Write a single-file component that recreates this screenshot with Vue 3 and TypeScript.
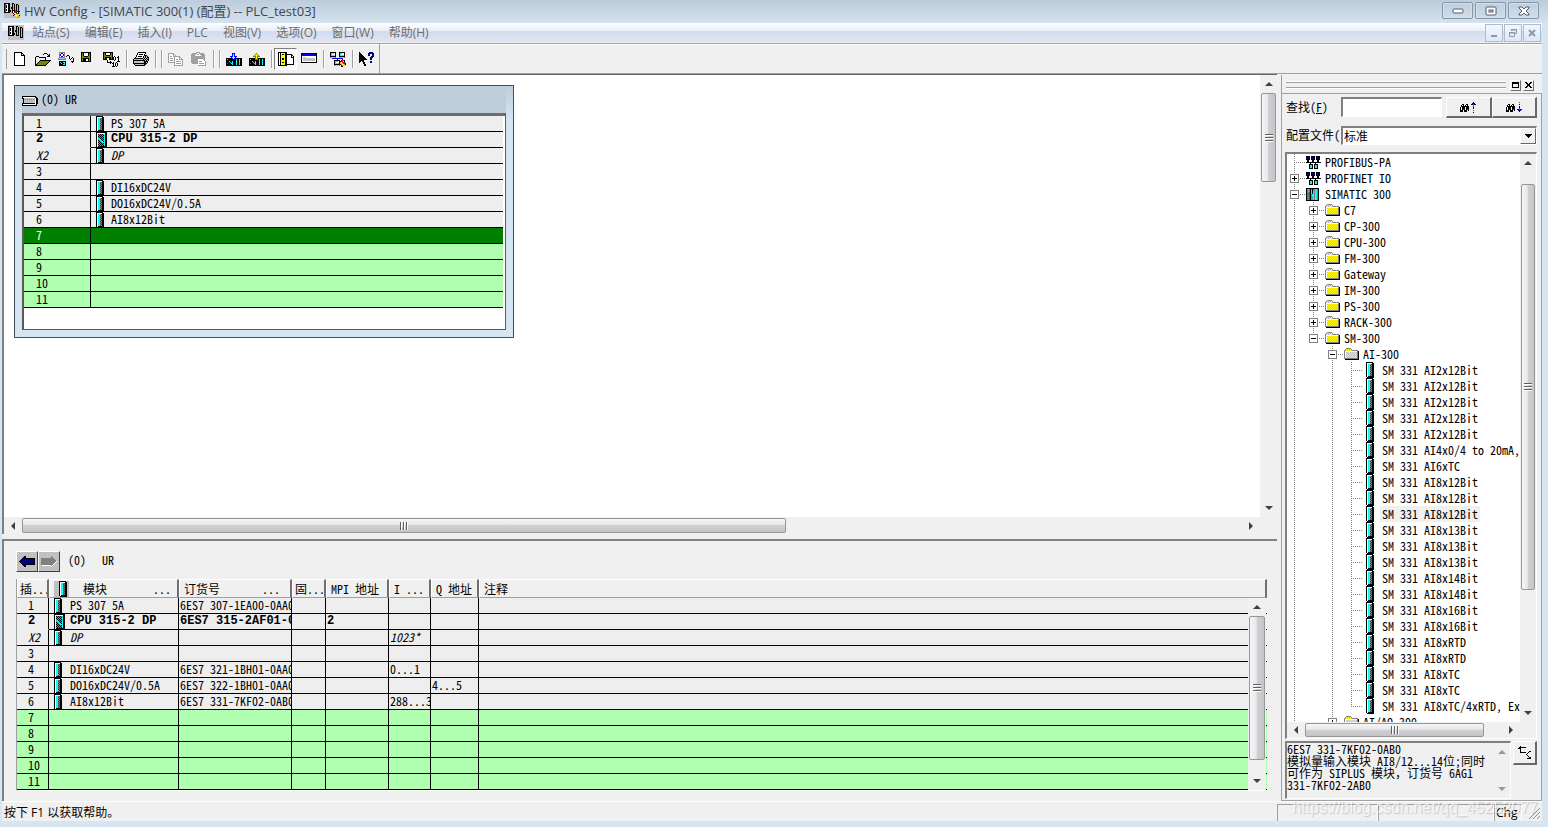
<script setup lang="ts">
import { h, ref } from 'vue'

const palette: Record<string, string> = {
  K: '#000000', W: '#ffffff', G: '#808080', L: '#c0c0c0', Y: '#ffff00', O: '#808000',
  C: '#00ffff', T: '#008080', B: '#0000ff', N: '#000080', R: '#ff0000', A: '#ff9a30', D: '#404040', S: '#a0a0a0',
}

const moduleRows = ['KKKKKKK.', 'KWWWWWKK']
for (let i = 0; i < 6; i++) moduleRows.push('KWCCGDKK', 'KWCCDGKK')
moduleRows.push('KWKKKKKK', '.KKKKKKK')

const doc = ['KKKKKKKK....', 'KWWWWWWKK...', 'KWWWWWWKWK..', 'KWWWWWWKKKK.']
for (let i = 0; i < 9; i++) doc.push('KWWWWWWWWWK.')
doc.push('KKKKKKKKKKK.')

const icons: Record<string, string[]> = {
  module: moduleRows,
  doc,
  cpu: [
    'KKKKKKKKKKK', 'KWWWWWWWWKK', 'KWKGKGKGCKK', 'KWGKGKGKCKK', 'KWKGKGKGCKK', 'KWGKGKGKCKK', 'KWCCKGKGCKK', 'KWGCCKGKCKK',
    'KWKGCCKGCKK', 'KWGKGCCKCKK', 'KWKGKGCCCKK', 'KWGKGKGKCKK', 'KWKGKGKGCKK', 'KWGKGKGKCKK', 'KWKKKKKKKKK', '.KKKKKKKKKK',
  ],
  logo: [
    'LLLLLLLLLLLLLLLL', 'KKKKKKLLKKLLLLLL', 'KTWWKKLLKCKLKKLL', 'KTKWKKLLKCKLKCKL', 'KTKWKKLLKCKLKCKL', 'KTKWKKLKKCKLKCKL', 'KTWWKKLKKCKLKCKL',
    'KTKWKKLLKCKLKCKL', 'KTKWKKKLKCKLKCKL', 'KTWWKKKLKCKLKCKL', 'KKKKKKLLKKKLKCKL', 'LLLLLLLLLLLLKCKL', 'LLLLLLLLLLLLKKKL', 'LLLLLLLLLLLLLLLL', 'LLLLLLLLLLLLLLLL',
  ],
  appLogo: [
    'KKKKKKLLKKLLLLLL', 'KTWWKKLLKCKLKKLL', 'KTKWKKLLKCKLKCKL', 'KTKWKKLLKCKLKCKL', 'KTKWKKLKKCKLKCKL', 'KTWWKKLKKCKLKCKL',
    'KTKWKKLLKCKLKCKL', 'KTKWKKKLKKKRKCKL', 'KTWWKKKLKWKRRKKK', 'KKKKKKLLKWRRKWKL', 'LLLLLLLLLKWYRRKL', 'LLLLLLLLLLKYYAWL', 'LLLLLLLLLKAYYYAK', 'LLLLLLLLLLLAYAAA', 'LLLLLLLLLLLLAAAL',
  ],
  open: [
    '.........KKK....', '........K...K.K.', '.............KK.', '.KKK........KKK.', 'KYWYKKKKKKK.....', 'KWYWYWYWYWK.....', 'KYWYWYWYWYK.....',
    'KWYWYKKKKKKKKKKK', 'KYWYKOOOOOOOOOK.', 'KWYKOOOOOOOOOK..', 'KYKOOOOOOOOOK...', 'KKOOOOOOOOOK....', 'KKKKKKKKKKK.....',
  ],
  online: [
    '.GGGGGG.........', '.GWBBWG.........', '.GBWWBG.........', '.GBWWBG..KK.....', '.GWBBWG.K..K....', '.GGGGGG....K..K.', 'GLLLLLLG...K.K.K', 'GGGGGGGG....K..K',
    '...............K', '.KKKKKKK.....KKK', '.KCKKCCK......K.', '.KKCKKCK........', '.KKKKCCK........', '.KKKKKKK........',
  ],
  save: [
    'KKKKKKKKKK......', 'KOKWWWWKOK......', 'KOKWWWWKOK......', 'KOKWWWWKOK......', 'KOOKKKKOOK......', 'KOOOOOOOOK......', 'KOKKKKKKOK......', 'KOKKKWWKOK......', 'KOKKKWWKOK......', 'KKKKKKKKKK......',
    '................', '................', '................', '................', '................',
  ],
  compile: [
    'KKKKKKKKKK.......', 'KOKWWWWKOK.......', 'KOKWWWWKOK.......', 'KOOKKKKOOK.......', 'KOOOOOOOOK.K...K.', 'KOKKKKKKOKK.K.KK.', 'KOKKWWKKOKK.K..K.', 'KKKKWWKKKKK.K..K.', '....K......K...K.',
    '....K..K......KKK', '....KKKKK.K..K...', '.......K.KK.K.K..', '..........K.K.K..', '..........K.K.K..', '.........KKK.K...',
  ],
  print: [
    '.....KKKKKKKK...', '....KWWWWWWWK...', '....KWKKKKWK....', '...KWWWWWWWKKK..', '...KWKKKKWKLKLK.', '..KWWWWWWWKLKLKK', '.KKKKKKKKKLKLKLK', 'KLLLLLLLLLKLKLKK', 'KKKKKKKKKKKKLKLK',
    'KLLLLLLYYLLKKKK.', 'KLLLLLLLLLLKKLK.', 'KKKKKKKKKKKKKK..', '.KLLLLLLLLLKK...', '..KKKKKKKKKK....',
  ],
  copy: [
    'SSSSSS..........', 'SWWWWSS.........', 'SWWWWSWS........', 'SWSSWSSSSSSS....', 'SWWWWWSWWWWSS...', 'SWSSSWSWWWWSWS..', 'SWWWWWSWSSWSSSS.', 'SWSSSWSWWWWWWWS.', 'SWWWWWSWSSSSSWS.', 'SSSSSSSWWWWWWWS.',
    '......SWSSSSSWS.', '......SWWWWWWWS.', '......SSSSSSSSS.',
  ],
  paste: [
    '.....SSSS.......', '.SSSSSWWSSSSS...', 'SSSSSWSSWSSSSS..', 'SSSSWWWWWWSSSS..', 'SSSSSSSSSSSSSS..', 'SSSSSSSSSSSSSS..', 'SSSSSSSSSSSSSS..', 'SSSSSSSWWWWWSS..', 'SSSSSSSWWWWWWS..', 'SSSSSSSWSSSWWWS.',
    'SSSSSSSWWWWWWWS.', '.SSSSSSWSSSSSWS.', '.......WWWWWWWS.', '.......SSSSSSSS.',
  ],
  download: [
    '......BBB.......', '......BYB.......', '......BYB.......', '....BBBYBBB.....', '.....BYYYB......', 'KKKKKKBYBKKKKKKK', 'KCKKKKKBKKCKKCKK', 'KKKKKKKKKKCKKCKK', 'KKKCKKCKKKCKKCKK', 'KKKKCKCKKKCKKCKK', 'KRKKKCCKKKCKKCKK', 'KKKKKKCKKKCKKCKK', 'KKKKKKKKKKKKKKKK',
  ],
  upload: [
    '.......O........', '......OYO.......', '.....OYYYO......', '....OOOYOOO.....', '......OYO.......', 'KKKKKKOYOKKKKKKK', 'KCKKKKOOOKCKKCKK', 'KKKKKKKKKKCKKCKK', 'KKKCKKCKKKCKKCKK', 'KKKKCKCKKKCKKCKK', 'KRKKKCCKKKCKKCKK', 'KKKKKKCKKKCKKCKK', 'KKKKKKKKKKKKKKKK',
  ],
  catalog: [
    'KKKKKKKKK.......', 'KWKYYYYKK.......', 'KWKYKKYKKKKKKK..', 'KWKYYYYKKWWWWKK.', 'KWKYYYYKKWWWWKWK', 'KWKYYYYKKWWWWKKK', 'KWKYKKYKKWWWWWWK', 'KWKYKKYKKWWWWWWK', 'KWKYYYYKKWWWWWWK', 'KWKYYYYKKWWWWWWK', 'KWKYKKYKKWWWWWWK', 'KWKYYYYKKWWWWWWK', 'KWKYYYYKKKKKKKKK', 'KKKKKKKKK.......',
  ],
  window: [
    'KKKKKKKKKKKKKKKK', 'KBBBBBBBBBBBBBBK', 'KBBBBBBBBBBBBBBK', 'KWWWWWWWWWWWWWWK', 'KWLLLWWWWWWWWWWK', 'KWLLLLLLLLLLLLWK', 'KWLLLLLLLLLLLLWK', 'KWLLLLLLLLLLLLWK', 'KWWWWWWWWWWWWWWK', 'KKKKKKKKKKKKKKKK', '................', '................',
  ],
  network: [
    'KKKKKK...KKKKKK.', 'KCCCWK...KCCCWK.', 'KCWWWK...KCWWWK.', 'KCCCCK...KCCCCK.', 'KKKKKK...KKKKKK.', 'GLLLLG...GLLLLG.', '..BBBBBBBBBBB...', '.......B....B...', '....KKKKKK.KRRK.', '....KCCCWKKRRWK.', '....KCWWWKAYRRK.', '....KCCCCKAYYRRK', '....KKKKKKKAYYAK', '....GLLLLG.KAAA.', '...........KK...',
  ],
  help: [
    'K.........NNNN..', 'KK.......NNNNNN.', 'KKK......NN..NN.', 'KKKK.....NN..NN.', 'KKKKK.......NNN.', 'KKKKKK.....NNN..', 'KKKKKKK....NN...', 'KKKKKKKK...NN...', 'KKKKK...........', 'KK.KK......NN...', 'K...KK.....NN...', '....KK..........', '.....KK.........', '.....KK.........',
  ],
  rack: [
    'KKKKKKKKKKKKKK..', 'KWWWWWWWWWWWWKK.', 'KKLLLLLLLLLLLWKK', '.KLGLGLGLGLGLWKK', '.KLLLLLLLLLLLWKK', '.KLLLLLLLLLLLWKK', '.KLLLLLLLLLLLWKK', 'KKKKKKKKKKKKKWKK', 'KWWWWWWWWWWWWWK.', 'KKKKKKKKKKKKKKK.',
  ],
  bus: [
    'KKKK.KKKK.KKKK.', 'KBNK.KBNK.KBNK.', 'KNNK.KNNK.KNNK.', 'KKKK.KKKK.KKKK.', '.KK...KK...KK..', '.KK...KK...KK..', 'KKKKKKKKKKKKKKK', '....K....K.....', '...KKKK.KKKK...', '...KCCK.KCCK...', '...KCCK.KCCK...', '...KCCK.KCCK...', '...KKKK.KKKK...',
  ],
  station: [
    'KKKKKKKKKKKKK', 'KGCGKGKGGCCGK', 'KGGGKCKGGCCGK', 'KGCGKCKCGCCGK', 'KGGTKCKCGCCGK', 'KTGTKCKCGCCGK', 'KGTTKGCCGCCGK', 'KGGTKGCCGCCGK', 'KGTTKGCCGCCGK', 'KGGTKGGCGCCGK', 'KTGTKGGCGCCGK', 'KGGTKGGCGCCGK', 'KKKKKKKKKKKKK',
  ],
  folder: [
    '..GGGGG........', '.GYLYLYG.......', 'GLYLYLYLGGGGGG.', 'GWWWWWWWWWWWWGK', 'GWLYLYLYLYLYLGK', 'GWYLYLYLYLYLYGK', 'GWLYLYLYLYLYLGK', 'GWYLYLYLYLYLYGK', 'GWLYLYLYLYLYLGK', 'GWYLYLYLYLYLYGK', 'GGGGGGGGGGGGGGK', '.KKKKKKKKKKKKKK',
  ],
  findUp: [
    '.............N..', '............NNN.', '..KK..KK...NNTNN', '.KWK.KWK.....T..', '.KKKKKKKK....T..', 'KWKKKWKKK....N..', 'KWKKKWKKK....N..', 'KWKDKWKDK.......', 'KKK.KKK.K....T..', 'KKK.KKK.........', '.............N..',
  ],
  findDown: [
    '.............T..', '................', '..KK..KK.....N..', '.KWK.KWK........', '.KKKKKKKK....N..', 'KWKKKWKKK....N..', 'KWKKKWKKK....T..', 'KWKDKWKDK..NNTNN', 'KKK.KKK.K...NNN.', 'KKK.KKK......N..', '................',
  ],
  back: [
    '.....KK.........', '....KNK.........', '...KNNKKKKKKKKKK', '..KNNNNNNNNNNNNK', '.KNNNNNNNNNNNNNK', 'KNNNNNNNNNNNNNNK', '.KNNNNNNNNNNNNNK', '..KNNNNNNNNNNNNK', '...KNNKKKKKKKKKK', '....KNK.........', '.....KK.........',
  ],
  forward: [
    '..........G.....', '..........GG....', 'GGGGGGGGGGGGG...', 'GGGGGGGGGGGGGG..', 'GGGGGGGGGGGGGGG.', 'GGGGGGGGGGGGGGGW', 'GGGGGGGGGGGGGGW.', 'GGGGGGGGGGGGGW..', 'GGGGGGGGGGGGW...', '.WWWWWWWWWGW....', '..........W.....',
  ],
  jump: [
    '...K............', '..KKKKKKK.......', '.KKK............', '...K............', '...K............', '...K........KK..', '...KKKKKK..K....', '..........K.....', '.........K......', '..........K.....', '...........K....', '............KK..', '..........KKKK..',
  ],
  dockMax: ['KKKKKKK', 'KKKKKKK', 'K.....K', 'K.....K', 'K.....K', 'KKKKKKK'],
  dockClose: ['KK...KK', '.KK.KK.', '..KKK..', '..KKK..', '.KK.KK.', 'KK...KK'],
}

function PixelIcon(props: { name: string }) {
  const rows = icons[props.name]
  const width = rows[0].length
  const paths: Record<string, string> = {}
  rows.forEach((row, y) => {
    for (let x = 0; x < row.length; x++) {
      const c = row[x]
      if (c === '.') continue
      let n = 1
      while (row[x + n] === c) n++
      paths[c] = (paths[c] ?? '') + `M${x} ${y}h${n}v1h-${n}z`
      x += n - 1
    }
  })
  return h(
    'svg',
    { class: 'pix', width, height: rows.length, viewBox: `0 0 ${width} ${rows.length}`, 'shape-rendering': 'crispEdges', 'aria-hidden': 'true' },
    Object.entries(paths).map(([c, d]) => h('path', { d, fill: palette[c] })),
  )
}
PixelIcon.props = ['name']

const menus = ['站点(S)', '编辑(E)', '插入(I)', 'PLC', '视图(V)', '选项(O)', '窗口(W)', '帮助(H)']
const tools: { icon: string; label: string; gap?: number; disabled?: boolean; pressed?: boolean }[] = [
  { icon: 'doc', label: '新建' },
  { icon: 'open', label: '打开' },
  { icon: 'online', label: '打开在线' },
  { icon: 'save', label: '保存' },
  { icon: 'compile', label: '保存并编译' },
  { icon: 'print', label: '打印', gap: 1 },
  { icon: 'copy', label: '复制', gap: 2, disabled: true },
  { icon: 'paste', label: '粘贴', disabled: true },
  { icon: 'download', label: '下载', gap: 2 },
  { icon: 'upload', label: '上传' },
  { icon: 'catalog', label: '目录', gap: 1, pressed: true },
  { icon: 'window', label: '地址总览' },
  { icon: 'network', label: '组态网络', gap: 1 },
  { icon: 'help', label: '帮助', gap: 1 },
]

interface Slot { no: string; name?: string; icon?: string; order?: string; mpi?: string; i?: string; q?: string; kind?: string }
const slots: Slot[] = [
  { no: '1', name: 'PS 307 5A', icon: 'module', order: '6ES7 307-1EA00-0AA0' },
  { no: '2', name: 'CPU 315-2 DP', icon: 'cpu', order: '6ES7 315-2AF01-0AB0', mpi: '2', kind: 'cpu' },
  { no: 'X2', name: 'DP', icon: 'module', i: '1023*', kind: 'sub' },
  { no: '3' },
  { no: '4', name: 'DI16xDC24V', icon: 'module', order: '6ES7 321-1BH01-0AA0', i: '0...1' },
  { no: '5', name: 'DO16xDC24V/0.5A', icon: 'module', order: '6ES7 322-1BH01-0AA0', q: '4...5' },
  { no: '6', name: 'AI8x12Bit', icon: 'module', order: '6ES7 331-7KF02-0AB0', i: '288...303' },
  ...['7', '8', '9', '10', '11'].map((no) => ({ no, kind: 'free' })),
]
const selectedSlot = ref('7')

interface TreeRow { guides: string[]; icon: string; text: string; toggle?: string; current?: boolean }
const modules = [
  'AI2x12Bit', 'AI2x12Bit', 'AI2x12Bit', 'AI2x12Bit', 'AI2x12Bit', 'AI4x0/4 to 20mA, Ex', 'AI6xTC', 'AI8x12Bit', 'AI8x12Bit', 'AI8x12Bit', 'AI8x13Bit',
  'AI8x13Bit', 'AI8x13Bit', 'AI8x14Bit', 'AI8x14Bit', 'AI8x16Bit', 'AI8x16Bit', 'AI8xRTD', 'AI8xRTD', 'AI8xTC', 'AI8xTC', 'AI8xTC/4xRTD, Ex',
]
const tree: TreeRow[] = [
  { guides: ['tee'], icon: 'bus', text: 'PROFIBUS-PA' },
  { guides: ['tee'], icon: 'bus', text: 'PROFINET IO', toggle: '+' },
  { guides: ['tee'], icon: 'station', text: 'SIMATIC 300', toggle: '-' },
  ...['C7', 'CP-300', 'CPU-300', 'FM-300', 'Gateway', 'IM-300', 'PS-300', 'RACK-300'].map((text) => ({ guides: ['bar', 'tee'], icon: 'folder', text, toggle: '+' })),
  { guides: ['bar', 'elbow'], icon: 'folder', text: 'SM-300', toggle: '-' },
  { guides: ['bar', 'none', 'tee'], icon: 'folder', text: 'AI-300', toggle: '-' },
  ...modules.map((m, n) => ({
    guides: ['bar', 'none', 'bar', n === modules.length - 1 ? 'elbow' : 'tee'],
    icon: 'module',
    text: `SM 331 ${m}`,
    current: n === 9,
  })),
  { guides: ['bar', 'none', 'tee'], icon: 'folder', text: 'AI/AO-300', toggle: '+' },
]

const query = ref('')
const profile = ref('标准')
</script>

<template>
  <div class="app">
    <header class="title">
      <PixelIcon name="appLogo" />
      <h1>HW Config - [SIMATIC 300(1) (配置) -- PLC_test03]</h1>
      <div class="winbtns">
        <button type="button" aria-label="最小化"><svg width="12" height="6"><rect x="1" y="1" width="10" height="4" rx="1" fill="#fff" stroke="#555b66" /></svg></button>
        <button type="button" aria-label="还原"><svg width="12" height="10"><rect x="1" y="1" width="10" height="8" rx="1" fill="#fff" stroke="#555b66" /><rect x="4" y="4" width="4" height="2" fill="#c5d2e0" stroke="#555b66" /></svg></button>
        <button type="button" aria-label="关闭"><svg width="12" height="10"><path d="M1 1h3l2 2 2-2h3v1L8 5l3 3v1H8L6 7 4 9H1V8l3-3-3-3z" fill="#fff" stroke="#555b66" /></svg></button>
      </div>
    </header>
    <div class="client">
      <nav class="menubar">
        <PixelIcon name="logo" />
        <button v-for="m in menus" :key="m" type="button" class="menu">{{ m }}</button>
        <div class="mdibtns">
          <button type="button" aria-label="最小化子窗口"><svg width="10" height="10"><path d="M2 8h6" stroke="#8e97a6" stroke-width="2" /></svg></button>
          <button type="button" aria-label="还原子窗口"><svg width="10" height="10" fill="none" stroke="#8e97a6"><path d="M3.500 3V1.500h5v4H7M3 2h6" /><path d="M1.500 4.500h5v4h-5zM1 5h6" /></svg></button>
          <button type="button" aria-label="关闭子窗口"><svg width="10" height="10"><path d="M2 2l6 6M8 2L2 8" stroke="#8e97a6" stroke-width="2" /></svg></button>
        </div>
      </nav>
      <div class="toolbar">
        <div class="tools">
          <template v-for="t in tools" :key="t.icon">
            <i v-for="n in t.gap ?? 0" :key="n" class="sep"></i>
            <button type="button" class="tool" :class="{ pressed: t.pressed }" :disabled="t.disabled" :aria-label="t.label"><PixelIcon :name="t.icon" /></button>
          </template>
        </div>
      </div>
      <main class="work">
        <div class="left">
          <section class="station">
            <div class="canvas">
              <div class="rack">
                <div class="rack-title"><PixelIcon name="rack" /><span>(0) UR</span></div>
                <div class="rack-body">
                  <table class="rack-table">
                    <colgroup><col class="c-rackno"><col></colgroup>
                    <tbody>
                      <tr v-for="s in slots" :key="s.no" :class="[s.kind, { selected: s.no === selectedSlot }]" @click="selectedSlot = s.no">
                        <td class="no">{{ s.no }}</td>
                        <td><div class="mod"><span v-if="s.icon" class="ic"><PixelIcon :name="s.icon" /></span>{{ s.name }}</div></td>
                      </tr>
                    </tbody>
                  </table>
                </div>
              </div>
            </div>
            <div class="vsb sb-main-v"><button type="button" class="up" aria-label="向上"></button><div class="track"><div class="thumb"></div></div><button type="button" class="down" aria-label="向下"></button></div>
            <div class="hsb sb-main-h"><button type="button" class="prev" aria-label="向左"></button><div class="track"><div class="thumb"></div></div><button type="button" class="next" aria-label="向右"></button></div>
          </section>
          <section class="detail">
            <div class="detail-nav">
              <button type="button" aria-label="后退"><PixelIcon name="back" /></button>
              <button type="button" aria-label="前进"><PixelIcon name="forward" /></button>
              <span class="rack-id">(0)</span><span>UR</span>
            </div>
            <div class="grid">
              <table class="slots">
                <colgroup><col class="c1"><col class="c2"><col class="c3"><col class="c4"><col class="c5"><col class="c6"><col class="c7"><col></colgroup>
                <thead>
                  <tr>
                    <th><div class="th th-slot">插...</div></th>
                    <th><div class="th th-mod"><span class="head-ic"><PixelIcon name="module" /></span>模块<span class="dots">...</span></div></th>
                    <th><div class="th">订货号<span class="dots dots-wide">...</span></div></th>
                    <th><div class="th th-slot">固...</div></th>
                    <th><div class="th">MPI 地址</div></th>
                    <th><div class="th">I ...</div></th>
                    <th><div class="th">Q 地址</div></th>
                    <th><div class="th">注释</div></th>
                  </tr>
                </thead>
                <tbody>
                  <tr v-for="s in slots" :key="s.no" :class="s.kind">
                    <td class="no">{{ s.no }}</td>
                    <td><div class="mod"><span v-if="s.icon" class="ic"><PixelIcon :name="s.icon" /></span>{{ s.name }}</div></td>
                    <td>{{ s.order }}</td>
                    <td></td>
                    <td>{{ s.mpi }}</td>
                    <td>{{ s.i }}</td>
                    <td>{{ s.q }}</td>
                    <td></td>
                  </tr>
                </tbody>
              </table>
              <div class="vsb sb-grid"><button type="button" class="up" aria-label="向上"></button><div class="track"><div class="thumb"></div></div><button type="button" class="down" aria-label="向下"></button></div>
            </div>
          </section>
        </div>
        <aside class="catalog">
          <div class="dock">
            <div class="grips"></div>
            <button type="button" aria-label="最大化目录"><PixelIcon name="dockMax" /></button>
            <button type="button" aria-label="关闭目录"><PixelIcon name="dockClose" /></button>
          </div>
          <div class="cat-body">
            <div class="find">
              <label for="q">查找(<u>F</u>)</label>
              <input id="q" v-model="query" type="text">
              <button type="button" aria-label="向上查找"><PixelIcon name="findUp" /></button>
              <button type="button" aria-label="向下查找"><PixelIcon name="findDown" /></button>
            </div>
            <div class="profile">
              <label for="profile">配置文件(</label>
              <div class="combo"><select id="profile" v-model="profile"><option>标准</option></select></div>
            </div>
            <div class="treebox">
              <ul class="tree">
                <li v-for="(r, n) in tree" :key="n">
                  <span v-for="(g, k) in r.guides" :key="k" class="guide" :class="g">
                    <button v-if="r.toggle && k === r.guides.length - 1" type="button" class="toggle" :class="{ plus: r.toggle === '+' }" :aria-label="r.text"></button>
                  </span>
                  <span class="tree-ic" :class="`ic-${r.icon}`"><PixelIcon :name="r.icon" /></span>
                  <span class="tree-text" :class="{ current: r.current }">{{ r.text }}</span>
                </li>
              </ul>
              <div class="vsb sb-tree-v"><button type="button" class="up" aria-label="向上"></button><div class="track"><div class="thumb"></div></div><button type="button" class="down" aria-label="向下"></button></div>
              <div class="hsb sb-tree-h"><button type="button" class="prev" aria-label="向左"></button><div class="track"><div class="thumb"></div></div><button type="button" class="next" aria-label="向右"></button></div>
              <div class="corner"></div>
            </div>
            <div class="info">
              <div class="infobox">
                <p>6ES7 331-7KF02-0AB0<br>模拟量输入模块 AI8/12...14位;同时<br>可作为 SIPLUS 模块<span class="wide-mark">，</span>订货号 6AG1<br>331-7KF02-2AB0</p>
                <div class="vsb sb-info"><button type="button" class="up" aria-label="向上"></button><div class="track"></div><button type="button" class="down" aria-label="向下"></button></div>
              </div>
              <button type="button" class="jump" aria-label="转到"><PixelIcon name="jump" /></button>
            </div>
          </div>
        </aside>
      </main>
      <footer class="status">
        <span class="hint">按下 F1 以获取帮助。</span>
        <span class="cell wide"></span>
        <span class="cell mid"></span>
        <span class="cell chg">Chg</span>
        <svg class="sizer" width="14" height="14"><path d="M2 13L13 2M6 13l7-7M10 13l3-3" stroke="#909090" stroke-width="1" /></svg>
        <span class="watermark">https://blog.csdn.net/qq_45252077</span>
      </footer>
    </div>
  </div>
</template>

<style>
body {
  background: #d7e4f2;
}
.pix {
  display: block;
  flex: none;
}
</style>

<style scoped>
.app {
  height: 100vh;
  display: flex;
  flex-direction: column;
  overflow: hidden;
  background: #d7e4f2;
  font: 12px/16px "Noto Sans CJK SC", sans-serif;
  font-feature-settings: "hwid";
  color: #000;
  box-sizing: border-box;
  padding-bottom: 6px;
}
.app *,
.app *::before,
.app *::after {
  box-sizing: border-box;
}
button {
  font: inherit;
  padding: 0;
  margin: 0;
  border: 0;
  color: inherit;
  background: none;
  display: flex;
  align-items: center;
  justify-content: center;
}
.title {
  flex: none;
  height: 23px;
  display: flex;
  align-items: center;
  gap: 4px;
  padding: 0 9px 2px 4px;
  background: linear-gradient(#bdccda, #d5e2f0);
}
h1 {
  margin: 0;
  flex: 1;
  font: 13px/20px "Open Sans", "Noto Sans CJK SC", sans-serif;
  font-feature-settings: normal;
  color: #3f4650;
}
.winbtns {
  display: flex;
  gap: 2px;
}
.winbtns button {
  width: 31px;
  height: 17px;
  border: 1px solid #8795a9;
  border-radius: 2px;
  box-shadow: inset 0 0 0 1px #d5e0ec;
}
.client {
  flex: 1;
  min-height: 0;
  margin: 0 6px 0 2px;
  background: #f0f0f0;
  display: flex;
  flex-direction: column;
}
.menubar {
  flex: none;
  height: 19px;
  display: flex;
  align-items: center;
  gap: 15px;
  padding: 0 1px 0 6px;
  background: linear-gradient(#ffffff, #e9edf7 40%, #d3dbee 45%, #dfe5f3);
  font: 12px/18px "Open Sans", "Noto Sans CJK SC", sans-serif;
  font-feature-settings: normal;
  color: #6d6d6d;
}
.menubar > .pix {
  margin-right: -7px;
}
.mdibtns {
  margin-left: auto;
  display: flex;
  gap: 1px;
}
.mdibtns button {
  width: 18px;
  height: 18px;
  border: 1px solid #a9bdd3;
  background: linear-gradient(#f2f7fc, #dde8f4);
}
.toolbar {
  flex: none;
  height: 31px;
  margin-top: 1px;
  border-top: 1px solid #a0a0a0;
  border-bottom: 1px solid #a0a0a0;
  box-shadow: inset 0 1px #fff;
  display: flex;
}
.tools {
  display: flex;
  align-items: center;
  padding: 1px 1px 0 6px;
  border-right: 1px solid #a0a0a0;
  background: linear-gradient(#a0a0a0, #a0a0a0) 4px 5px / 1px 20px no-repeat;
}
.tool {
  width: 23px;
  height: 22px;
}
.tool.pressed {
  border: 1px solid #fff;
  border-top-color: #808080;
  border-left-color: #808080;
  background: #f8f8f8;
}
.sep {
  width: 6px;
  height: 18px;
  background: linear-gradient(90deg, #a0a0a0 1px, #fff 1px, #fff 2px, transparent 2px) 3px 0 no-repeat;
}
.work {
  flex: 1;
  min-height: 0;
  display: flex;
  gap: 4px;
}
.left {
  flex: 1;
  min-width: 0;
  display: flex;
  flex-direction: column;
}
.station {
  flex: 1;
  min-height: 0;
  display: grid;
  grid-template: minmax(0, 1fr) 17px / minmax(0, 1fr) 17px;
  border-left: 2px solid #808080;
  border-top: 1px solid #646464;
  background: #f0f0f0;
}
.canvas {
  background: #fff;
  padding: 10px;
  overflow: hidden;
}
.rack {
  width: 500px;
  border: 1px solid #4a4f57;
  background: linear-gradient(#bfcddb, #d7e4f2 34px);
  padding: 2px 7px 7px;
}
.rack-title {
  height: 25px;
  display: flex;
  align-items: center;
  gap: 3px;
  background: #bfcddb;
}
.rack-title span {
  padding-bottom: 4px;
}
.rack-body {
  border: 1px solid #5a5a5a;
  border-top: 3px solid #6e6e6e;
  border-left-width: 2px;
  background: #fff;
  padding: 0 2px 21px 0;
}
table {
  border-collapse: separate;
  border-spacing: 0;
  table-layout: fixed;
  width: 100%;
}
td {
  height: 16px;
  line-height: 14px;
  vertical-align: top;
  padding: 0 0 0 1px;
  border-bottom: 1px solid #000;
  border-right: 1px solid #000;
  background: #eee;
  white-space: nowrap;
  overflow: hidden;
}
td:last-child {
  border-right: 0;
}
.c-rackno {
  width: 67px;
}
.rack-table .no {
  padding-left: 12px;
}
.mod {
  display: flex;
  align-items: flex-start;
  height: 15px;
}
.ic {
  flex: none;
  width: 15px;
  height: 15px;
  margin-left: 4px;
}
.cpu td {
  font-family: "Liberation Mono", monospace;
  font-weight: bold;
  line-height: 15px;
}
.cpu .no {
  border-bottom-color: #eee;
}
.sub {
  font-style: italic;
}
.free td {
  background: #b0ffb0;
}
.selected td {
  background: #008000;
  color: #fff;
}
.detail {
  flex: 0 0 259px;
  display: flex;
  flex-direction: column;
  margin-top: 5px;
  border-top: 2px solid #808080;
  border-left: 2px solid #808080;
  padding: 10px 10px 10px 12px;
}
.detail-nav {
  flex: none;
  display: flex;
  height: 28px;
  line-height: 18px;
}
.detail-nav button {
  width: 22px;
  height: 21px;
  background: #c0c0c0;
  border: 1px solid #404040;
  border-top-color: #fff;
  border-left-color: #fff;
}
.rack-id {
  margin: 0 16px 0 8px;
}
.grid {
  position: relative;
  flex: 1;
  min-height: 0;
  overflow: hidden;
  border-left: 1px solid #a0a0a0;
  border-bottom: 1px solid #fff;
}
.c1 { width: 32px; }
.c2 { width: 130px; }
.c3 { width: 113px; }
.c4 { width: 34px; }
.c5 { width: 63px; }
.c6 { width: 42px; }
.c7 { width: 48px; }
th {
  padding: 0;
  font-weight: normal;
  text-align: left;
}
.th {
  height: 19px;
  display: flex;
  align-items: center;
  padding-left: 4px;
  white-space: nowrap;
  overflow: hidden;
  border: 1px solid #fff;
  border-right: 2px solid #707070;
  border-bottom-color: #a0a0a0;
}
.th-slot {
  padding-left: 2px;
}
.th-mod {
  gap: 14px;
}
.head-ic {
  width: 15px;
  height: 16px;
  padding-left: 5px;
  background: #c0c0c0;
}
.dots {
  margin-left: auto;
  padding-right: 6px;
}
.dots-wide {
  padding-right: 10px;
}
.slots .no {
  padding-left: 11px;
}
.slots .ic {
  width: 16px;
  margin-left: 4px;
}
.vsb {
  display: flex;
  flex-direction: column;
  background: #f0f0f0;
  padding: 0 1px;
}
.hsb {
  display: flex;
  background: #f0f0f0;
  padding: 1px 0;
}
.vsb button {
  flex: none;
  height: 18px;
  width: 100%;
}
.hsb button {
  flex: none;
  width: 18px;
  height: 100%;
}
.vsb button::after,
.hsb button::after {
  content: "";
  border: 4px solid transparent;
}
.vsb .up::after { border-top: 0; border-bottom-color: #404040; }
.vsb .down::after { border-bottom: 0; border-top-color: #404040; }
.hsb .prev::after { border-left: 0; border-right-color: #404040; }
.hsb .next::after { border-right: 0; border-left-color: #404040; }
.track {
  flex: 1;
  min-height: 0;
  min-width: 0;
}
.thumb {
  display: flex;
  align-items: center;
  justify-content: center;
  border: 1px solid #979797;
  border-radius: 2px;
  background: linear-gradient(90deg, #f5f5f5, #e8e8ea 45%, #d0d0d4 50%, #c5c5c9);
}
.hsb .thumb {
  height: 100%;
  background: linear-gradient(#f5f5f5, #e8e8ea 45%, #d0d0d4 50%, #c5c5c9);
}
.thumb::after {
  content: "";
  width: 8px;
  height: 8px;
  background: repeating-linear-gradient(#606060 0 1px, #fff 1px 2px, transparent 2px 3px);
}
.hsb .thumb::after {
  background: repeating-linear-gradient(90deg, #606060 0 1px, #fff 1px 2px, transparent 2px 3px);
}
.sb-main-v .thumb { height: 22%; }
.sb-main-h .thumb { width: 62.6%; }
.sb-grid {
  position: absolute;
  right: 1px;
  top: 19px;
  bottom: 0;
  width: 18px;
}
.sb-grid .thumb { height: 92%; }
.sb-tree-v .track { padding-top: 12px; }
.sb-tree-v .thumb { height: 78%; }
.sb-tree-h .thumb { width: 91%; }
.corner { background: #f0f0f0; }
.sb-info button { opacity: 0.5; }
.catalog {
  flex: 0 0 261px;
  display: flex;
  flex-direction: column;
  border-left: 1px solid #a0a0a0;
  border-bottom: 1px solid #a0a0a0;
  margin-top: 1px;
}
.dock {
  flex: none;
  height: 19px;
  display: flex;
  align-items: center;
  gap: 2px;
  padding: 2px 8px 0 4px;
  border-bottom: 1px solid #a0a0a0;
}
.grips {
  flex: 1;
  height: 6px;
  margin-right: 2px;
  border: solid #a0a0a0;
  border-width: 1px 0;
  box-shadow: 0 -1px #fff, 0 1px #fff;
}
.dock button {
  width: 11px;
  height: 11px;
  border: 1px solid #707070;
  border-top-color: #fff;
  border-left-color: #fff;
}
.cat-body {
  flex: 1;
  min-height: 0;
  display: flex;
  flex-direction: column;
  padding: 3px 4px 1px 3px;
  border-right: 1px solid #a0a0a0;
}
.find {
  flex: none;
  display: flex;
  height: 29px;
  align-items: flex-start;
}
.find label {
  width: 56px;
  padding-left: 1px;
  line-height: 20px;
}
.find input {
  width: 101px;
  height: 20px;
  margin-right: 4px;
  font: inherit;
}
.find input,
.combo,
.treebox,
.infobox {
  background: #fff;
  border: 1px solid #fff;
  border-top: 2px solid #808080;
  border-left: 2px solid #808080;
}
.find button,
.jump {
  flex: 1;
  height: 21px;
  border: 1px solid #696969;
  border-width: 1px 2px 2px 1px;
  border-top-color: #fff;
  border-left-color: #fff;
}
.profile {
  flex: none;
  display: flex;
  height: 26px;
}
.profile label {
  width: 56px;
  padding-left: 1px;
  line-height: 18px;
  white-space: nowrap;
  overflow: hidden;
}
.combo {
  position: relative;
  flex: 1;
  height: 19px;
}
.combo select {
  appearance: none;
  display: block;
  width: 100%;
  height: 16px;
  padding: 0 0 0 1px;
  border: 0;
  background: none;
  font: inherit;
  line-height: 16px;
  color: #000;
}
.combo::after {
  content: "";
  position: absolute;
  right: 0;
  top: 0;
  width: 16px;
  height: 16px;
  pointer-events: none;
  border: 1px solid #696969;
  border-top-color: #fff;
  border-left-color: #fff;
  background: linear-gradient(#000, #000) 4px 5px / 7px 1px no-repeat, linear-gradient(#000, #000) 5px 6px / 5px 1px no-repeat,
    linear-gradient(#000, #000) 6px 7px / 3px 1px no-repeat, linear-gradient(#000, #000) 7px 8px / 1px 1px no-repeat, #f0f0f0;
}
.treebox {
  flex: 1;
  min-height: 0;
  display: grid;
  grid-template: minmax(0, 1fr) 16px / minmax(0, 1fr) 16px;
}
.tree {
  margin: 0;
  padding: 0;
  list-style: none;
  overflow: hidden;
}
.tree li {
  display: flex;
  height: 16px;
  white-space: nowrap;
}
.guide {
  flex: none;
  width: 19px;
  height: 16px;
  padding: 4px 0 0 3px;
}
.bar {
  background: repeating-linear-gradient(#808080 0 1px, transparent 1px 2px) 7px 0 / 1px 16px no-repeat;
}
.tee {
  background: repeating-linear-gradient(#808080 0 1px, transparent 1px 2px) 7px 0 / 1px 16px no-repeat,
    repeating-linear-gradient(90deg, #808080 0 1px, transparent 1px 2px) 7px 8px / 12px 1px no-repeat;
}
.elbow {
  background: repeating-linear-gradient(#808080 0 1px, transparent 1px 2px) 7px 0 / 1px 8px no-repeat,
    repeating-linear-gradient(90deg, #808080 0 1px, transparent 1px 2px) 7px 8px / 12px 1px no-repeat;
}
.toggle {
  width: 9px;
  height: 9px;
  border: 1px solid #808080;
  background: linear-gradient(#000, #000) 1px 3px / 5px 1px no-repeat, #fff;
}
.toggle.plus {
  background: linear-gradient(#000, #000) 1px 3px / 5px 1px no-repeat, linear-gradient(#000, #000) 3px 1px / 1px 5px no-repeat, #fff;
}
.tree-ic {
  flex: none;
  width: 17px;
  height: 16px;
  display: flex;
  align-items: center;
}
.ic-module {
  padding-left: 3px;
}
.tree-text {
  padding: 0 2px;
}
.current {
  background: #f0f0f0;
}
.info {
  flex: none;
  display: flex;
  height: 58px;
  margin-top: 2px;
  gap: 2px;
}
.infobox {
  flex: 1;
  display: flex;
  background: #f0f0f0;
}
.infobox p {
  flex: 1;
  margin: 0;
  line-height: 12px;
  white-space: nowrap;
}
.wide-mark {
  font-feature-settings: normal;
}
.sb-info {
  width: 17px;
}
.jump {
  flex: 0 0 24px;
  height: 24px;
}
.status {
  position: relative;
  flex: none;
  height: 20px;
  display: flex;
  align-items: center;
  border-top: 1px solid #fff;
  padding-top: 2px;
  font: 12px/16px "Open Sans", "Noto Sans CJK SC", sans-serif;
  font-feature-settings: normal;
}
.hint {
  flex: 1;
  padding-left: 2px;
}
.cell {
  height: 17px;
  border: 1px solid #a0a0a0;
  border-right-color: #fff;
  border-bottom: 0;
}
.wide { width: 101px; }
.mid { width: 116px; }
.chg { width: 28px; padding-left: 1px; }
.sizer {
  margin: 0 1px 0 5px;
}
.watermark {
  position: absolute;
  right: 4px;
  top: -5px;
  font: 16px/22px "Liberation Sans", sans-serif;
  color: rgba(255, 255, 255, 0.7);
  text-shadow: 1px 1px 1px rgba(120, 120, 120, 0.35);
  pointer-events: none;
}
</style>
